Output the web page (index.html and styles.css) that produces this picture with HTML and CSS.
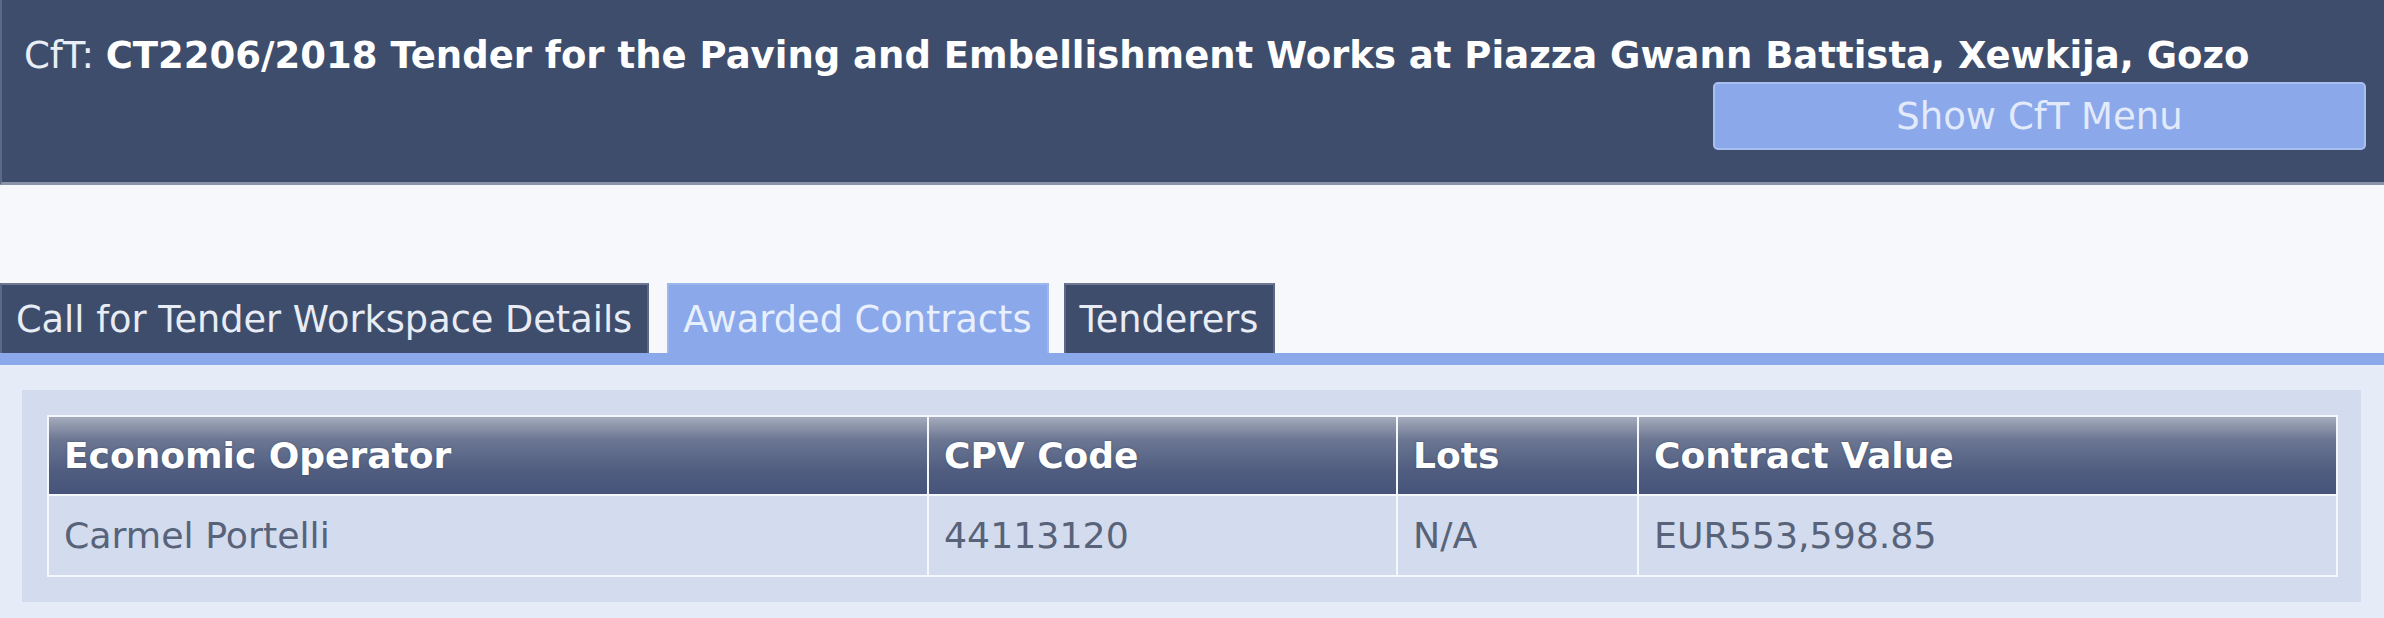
FILE: index.html
```html
<!DOCTYPE html>
<html>
<head>
<meta charset="utf-8">
<link rel="stylesheet" href="styles.css">
</head>
<body>
<header class="cft-header">
  <h1 class="cft-title"><span class="cft-label">CfT:</span> <b>CT2206/2018 Tender for the Paving and Embellishment Works at Piazza Gwann Battista, Xewkija, Gozo</b></h1>
  <div class="cft-actions"><button class="menu-btn">Show CfT Menu</button></div>
</header>
<nav class="tabs">
  <a class="tab">Call for Tender Workspace Details</a>
  <a class="tab tab-active">Awarded Contracts</a>
  <a class="tab tab-last">Tenderers</a>
</nav>
<div class="tab-strip"></div>
<section class="panel">
  <div class="panel-inner">
    <table class="grid">
      <colgroup>
        <col class="c1"><col class="c2"><col class="c3"><col class="c4">
      </colgroup>
      <thead>
        <tr><th>Economic Operator</th><th>CPV Code</th><th>Lots</th><th>Contract Value</th></tr>
      </thead>
      <tbody>
        <tr><td>Carmel Portelli</td><td>44113120</td><td>N/A</td><td>EUR553,598.85</td></tr>
      </tbody>
    </table>
  </div>
</section>
</body>
</html>
```
FILE: styles.css
```css
html, body {
  margin: 0;
  padding: 0;
  background: #f6f8fc;
  font-family: "DejaVu Sans", "Liberation Sans", sans-serif;
}
.cft-header {
  background: #3e4d6c;
  border-bottom: 3px solid #8a93a8;
  border-left: 2px solid #5d6884;
  box-sizing: border-box;
  height: 185px;
  padding: 34px 18px 0 22px;
  display: flex;
  flex-direction: column;
}
.cft-title {
  margin: 0;
  font-size: 37px;
  line-height: 44px;
  font-weight: normal;
  color: #e9edf5;
  white-space: nowrap;
}
.cft-title b {
  font-weight: bold;
  color: #ffffff;
}
.cft-actions {
  display: flex;
  justify-content: flex-end;
  margin-top: 4px;
}
.menu-btn {
  width: 653px;
  height: 68px;
  background: #8aa8ea;
  border: 2px solid #a9bff1;
  border-radius: 5px;
  color: #e2eafb;
  font-family: inherit;
  font-size: 37px;
  padding: 0;
}
.tabs {
  display: flex;
  margin-top: 98px;
  height: 70px;
}
.tab {
  display: flex;
  align-items: center;
  box-sizing: border-box;
  height: 70px;
  background: #3e4d6c;
  color: #e8ecf5;
  font-size: 36.7px;
  border-top: 2px solid #6e7892;
  border-left: 2px solid #5d6884;
  border-right: 2px solid #5d6884;
  padding: 0 15px 0 14px;
}
.tab + .tab { margin-left: 18px; }
.tab-last { margin-left: 15px !important; }
.tab-active {
  background: #8aa8ea;
  color: #e9f0fd;
  border-color: #9cb6ee;
}
.tab-strip {
  height: 12px;
  background: #8aa8ea;
}
.panel {
  background: #e6ecf7;
  padding: 25px 23px 18px 22px;
}
.panel-inner {
  background: #d3dcee;
  padding: 25px 23px 25px 25px;
}
.grid {
  width: 100%;
  border-collapse: collapse;
  border: 2px solid #ffffff;
}
.c1 { width: 880px; }
.c2 { width: 469px; }
.c3 { width: 241px; }
.grid th, .grid td {
  border: 2px solid #f4f7fc;
  text-align: left;
  padding: 0 15px;
}
.grid th {
  height: 79px;
  box-sizing: border-box;
  background: linear-gradient(#a4abbb 0%, #6b7692 30%, #505d80 70%, #46547a 100%);
  color: #ffffff;
  font-weight: bold;
  font-size: 36px;
  text-shadow: 0 0 2px rgba(40,50,80,0.6);
}
.grid td {
  height: 81px;
  box-sizing: border-box;
  color: #58637a;
  font-size: 36.3px;
}
```
